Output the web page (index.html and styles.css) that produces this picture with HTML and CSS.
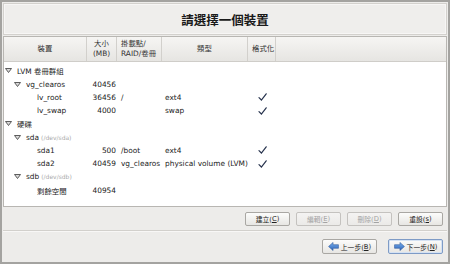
FILE: index.html
```html
<!DOCTYPE html>
<html lang="zh-Hant">
<head>
<meta charset="utf-8">
<link rel="stylesheet" href="styles.css">
</head>
<body>
<div class="window">
  <div class="title">請選擇一個裝置</div>
  <div class="tree">
    <div class="thead">
      <div class="th center">裝置</div>
      <div class="th center">大小<br>(MB)</div>
      <div class="th">掛載點/<br>RAID/卷冊</div>
      <div class="th center">類型</div>
      <div class="th">格式化</div>
      <div class="th last"></div>
    </div>
    <div class="rows">
      <div class="row">
        <div class="name l0"><svg class="exp" viewBox="0 0 7 5"><polygon points="0.5,0.5 6.5,0.5 3.5,4.5"/></svg>LVM 卷冊群組</div>
        <div class="size"></div><div class="mount"></div><div class="type"></div><div class="fmt"></div>
      </div>
      <div class="row">
        <div class="name l1"><svg class="exp" viewBox="0 0 7 5"><polygon points="0.5,0.5 6.5,0.5 3.5,4.5"/></svg>vg_clearos</div>
        <div class="size">40456</div><div class="mount"></div><div class="type"></div><div class="fmt"></div>
      </div>
      <div class="row">
        <div class="name l2">lv_root</div>
        <div class="size">36456</div><div class="mount">/</div><div class="type">ext4</div>
        <div class="fmt"><svg class="check" viewBox="0 0 9 8"><path d="M1 4.6 L3.4 7 L8.2 0.8"/></svg></div>
      </div>
      <div class="row">
        <div class="name l2">lv_swap</div>
        <div class="size">4000</div><div class="mount"></div><div class="type">swap</div>
        <div class="fmt"><svg class="check" viewBox="0 0 9 8"><path d="M1 4.6 L3.4 7 L8.2 0.8"/></svg></div>
      </div>
      <div class="row">
        <div class="name l0"><svg class="exp" viewBox="0 0 7 5"><polygon points="0.5,0.5 6.5,0.5 3.5,4.5"/></svg>硬碟</div>
        <div class="size"></div><div class="mount"></div><div class="type"></div><div class="fmt"></div>
      </div>
      <div class="row">
        <div class="name l1"><svg class="exp" viewBox="0 0 7 5"><polygon points="0.5,0.5 6.5,0.5 3.5,4.5"/></svg>sda <span class="dev">(/dev/sda)</span></div>
        <div class="size"></div><div class="mount"></div><div class="type"></div><div class="fmt"></div>
      </div>
      <div class="row">
        <div class="name l2">sda1</div>
        <div class="size">500</div><div class="mount">/boot</div><div class="type">ext4</div>
        <div class="fmt"><svg class="check" viewBox="0 0 9 8"><path d="M1 4.6 L3.4 7 L8.2 0.8"/></svg></div>
      </div>
      <div class="row">
        <div class="name l2">sda2</div>
        <div class="size">40459</div><div class="mount">vg_clearos</div><div class="type">physical volume (LVM)</div>
        <div class="fmt"><svg class="check" viewBox="0 0 9 8"><path d="M1 4.6 L3.4 7 L8.2 0.8"/></svg></div>
      </div>
      <div class="row">
        <div class="name l1"><svg class="exp" viewBox="0 0 7 5"><polygon points="0.5,0.5 6.5,0.5 3.5,4.5"/></svg>sdb <span class="dev">(/dev/sdb)</span></div>
        <div class="size"></div><div class="mount"></div><div class="type"></div><div class="fmt"></div>
      </div>
      <div class="row">
        <div class="name l2">剩餘空間</div>
        <div class="size">40954</div><div class="mount"></div><div class="type"></div><div class="fmt"></div>
      </div>
    </div>
  </div>
  <div class="actions">
    <div class="btn">建立(<u>C</u>)</div>
    <div class="btn disabled">編輯(<u>E</u>)</div>
    <div class="btn disabled">刪除(<u>D</u>)</div>
    <div class="btn">重設(<u>s</u>)</div>
  </div>
  <div class="nav">
    <div class="btn navbtn"><svg class="arrow" viewBox="0 0 12 10"><defs><linearGradient id="g1" x1="0" y1="0" x2="0" y2="1"><stop offset="0" stop-color="#79b0ee"/><stop offset="1" stop-color="#2d63b8"/></linearGradient></defs><polygon points="0.5,5 5.5,0.5 5.5,3 11.5,3 11.5,7 5.5,7 5.5,9.5" fill="url(#g1)" stroke="#2a5396" stroke-width="0.6"/></svg>上一步(<u>B</u>)</div>
    <div class="btn navbtn focus"><svg class="arrow" viewBox="0 0 12 10"><defs><linearGradient id="g2" x1="0" y1="0" x2="0" y2="1"><stop offset="0" stop-color="#79b0ee"/><stop offset="1" stop-color="#2d63b8"/></linearGradient></defs><polygon points="11.5,5 6.5,0.5 6.5,3 0.5,3 0.5,7 6.5,7 6.5,9.5" fill="url(#g2)" stroke="#2a5396" stroke-width="0.6"/></svg>下一步(<u>N</u>)</div>
  </div>
</div>
</body>
</html>
```

FILE: styles.css
```css
* { box-sizing: border-box; }

html, body {
  margin: 0;
  padding: 0;
  background: #edecea;
}

body {
  font-family: "DejaVu Sans", "Noto Sans CJK TC", sans-serif;
  font-size: 7.4px;
  color: #222;
}

.window {
  width: 450px;
  height: 264px;
  border: 2px solid #a4a3a0;
  padding: 1px;
  display: flex;
  flex-direction: column;
  background: #edecea;
}

.title {
  height: 32px;
  flex: none;
  border: 1px solid #d3d1cd;
  background: #efeeec;
  box-shadow: inset 0 0 0 1px #f7f6f5;
  display: flex;
  align-items: center;
  justify-content: center;
  font-family: "Noto Sans CJK TC", sans-serif;
  font-weight: bold;
  font-size: 12.5px;
  color: #1a1a1a;
}

.tree {
  margin-top: 1px;
  height: 171px;
  flex: none;
  border: 1px solid #b8b6b2;
  background: #ffffff;
}

.thead {
  display: grid;
  grid-template-columns: 83px 30px 45px 86px 28px 1fr;
  height: 25px;
  background: linear-gradient(#f6f5f3, #e6e5e2);
  border-bottom: 1px solid #cfcdc9;
}

.th {
  display: flex;
  align-items: center;
  padding-left: 4px;
  border-right: 1px solid #d2d0cc;
  line-height: 10px;
  color: #333;
}

.th.center {
  justify-content: center;
  text-align: center;
  padding-left: 0;
}

.th.last { border-right: none; }

.rows {
  padding-top: 2.2px;
}

.row {
  display: grid;
  grid-template-columns: 83px 30px 45px 86px 28px 1fr;
  height: 13.25px;
  align-items: center;
  white-space: nowrap;
}

.name {
  display: flex;
  align-items: center;
}

.l0 { padding-left: 1px; }
.l1 { padding-left: 10px; }
.l2 { padding-left: 33px; }

.exp {
  width: 7px;
  height: 5px;
  margin-right: 5px;
  fill: #d9d9d9;
  stroke: #4d4d4d;
  stroke-width: 0.9;
  stroke-linejoin: round;
}

.dev {
  color: #a9a9a9;
  font-size: 6px;
  margin-left: 2px;
}

.size {
  text-align: right;
  padding-right: 1px;
}

.mount { padding-left: 4px; }
.type { padding-left: 3px; }

.fmt {
  display: flex;
  justify-content: center;
  align-items: center;
}

.check {
  width: 9px;
  height: 8px;
  fill: none;
  stroke: #26324d;
  stroke-width: 1.2;
  stroke-linecap: round;
}

.actions {
  height: 24px;
  flex: none;
  display: flex;
  justify-content: flex-end;
  align-items: flex-start;
  gap: 6px;
  padding: 5px 4px 0 0;
  border-bottom: 1px solid #d2d0cc;
}

.nav {
  flex: 1;
  display: flex;
  justify-content: flex-end;
  align-items: flex-start;
  gap: 11px;
  padding: 7px 4px 0 0;
  border-top: 1px solid #f8f7f6;
}

.btn {
  width: 45px;
  height: 14px;
  border: 1px solid #a9a7a3;
  border-radius: 2px;
  background: linear-gradient(#fcfcfb, #e7e6e3);
  display: flex;
  align-items: center;
  justify-content: center;
  font-size: 6.8px;
  color: #222;
  white-space: nowrap;
}

.btn u { text-decoration-thickness: 0.6px; text-underline-offset: 1px; }

.btn.disabled {
  color: #a3a3a3;
  background: linear-gradient(#f4f3f2, #ebeae8);
  border-color: #c4c2bf;
}

.navbtn {
  width: 55px;
  height: 15px;
}

.navbtn.focus {
  border-color: #7e9bc6;
  box-shadow: inset 0 0 0 1px #d5e2f3;
}

.arrow {
  width: 11px;
  height: 9px;
  margin-right: 2px;
}
```
